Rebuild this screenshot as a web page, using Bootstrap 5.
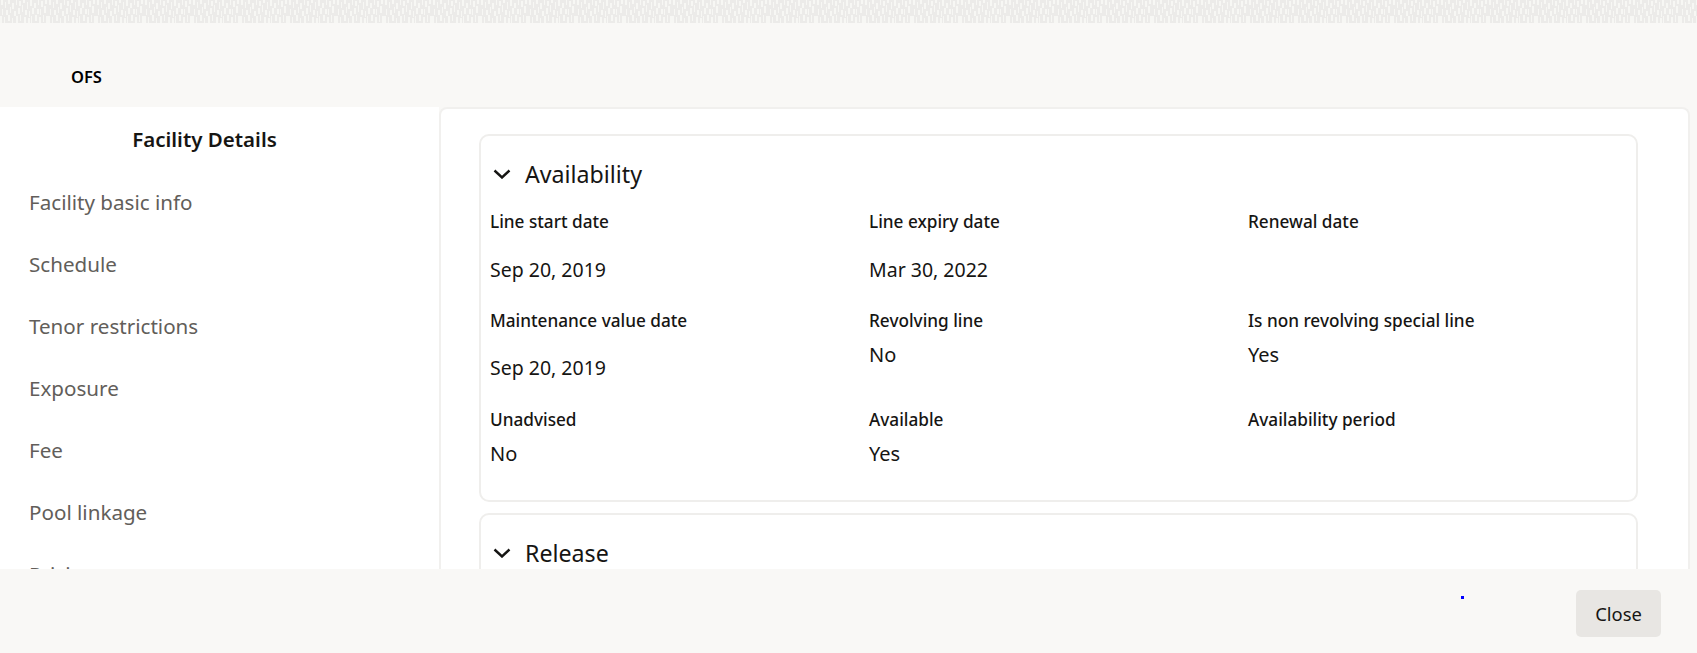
<!DOCTYPE html>
<html lang="en">
<head>
<meta charset="utf-8">
<title>Facility Details</title>
<link href="https://cdn.jsdelivr.net/npm/bootstrap@5.3.0/dist/css/bootstrap.min.css" rel="stylesheet">
<style>
html,body{height:653px;overflow:hidden}
body{background:#f9f8f6;font-family:"Noto Sans","Liberation Sans",sans-serif;color:#161513}
.top-band{height:23px;line-height:0;background:#ecebe9}
.top-band svg{display:block;width:100%;height:23px}
.head-bar{height:84px;padding:44px 0 0 71px;font-size:16.5px;font-weight:600;line-height:20px;color:#000}
.work{height:462px;overflow:hidden}
.side{width:439px;background:#fff;height:100%;overflow:hidden;flex:none}
.side-title{font-size:20.5px;font-weight:600;line-height:28px;text-align:center;padding:18px 30px 0 0;margin-bottom:18px}
.side-link{display:block;padding:0 0 0 29px;font-size:20.6px;line-height:62px;height:62px;color:#625e5a;font-weight:400;text-decoration:none}
.panel{width:1251px;flex:none;background:#fff;border:2px solid #f1f0ee;border-bottom:0;border-radius:8px 8px 0 0;padding:25px 50px 0 38px;height:100%;overflow:hidden}
.sect{border:2px solid #efeeec;border-radius:10px;margin-bottom:11px}
.sect-avail{height:368px}
.sect-head{display:flex;align-items:center;gap:14px;height:52px;padding:0 0 0 12px;margin-top:12px;font-size:23.2px;font-weight:400;line-height:30px}
.chev{width:18px;height:10px;flex:none}
.grid-row{display:grid;grid-template-columns:379px 379px 1fr;padding-left:9px}
.r0{padding-top:8px}
.r1{height:107px}.r2{height:99px}
.lab{font-size:17.2px;font-weight:500;line-height:24px;padding-top:2px}
.val{font-size:20px;line-height:26px;margin-top:23px}
.r2 .val{margin-top:22px}
.r2 .val.near,.val.near{margin-top:9px}
.date{font-size:19.5px}
.foot{height:84px;padding:21px 36px 0 0}
.close-btn{width:85px;height:47px;background:#e8e6e3;border:0;border-radius:5px;color:#161513;font-size:18.4px;font-weight:400;padding:0}
.close-btn:hover{background:#e8e6e3}
.dotmark{width:3px;height:3px;background:#0000ff;margin:6px 112px 0 0}
</style>
</head>
<body>
<div class="top-band">
  <svg aria-hidden="true"><defs><pattern id="weave" width="48" height="23" patternUnits="userSpaceOnUse"><g fill="#fbfaf8" fill-opacity=".75"><rect x="1" y="0" width="2" height="5"/><rect x="5" y="2" width="1" height="6"/><rect x="8" y="0" width="2" height="4"/><rect x="12" y="3" width="2" height="6"/><rect x="16" y="0" width="1" height="5"/><rect x="19" y="1" width="2" height="5"/><rect x="23" y="0" width="2" height="3"/><rect x="27" y="2" width="1" height="7"/><rect x="30" y="0" width="2" height="6"/><rect x="34" y="3" width="2" height="5"/><rect x="38" y="0" width="1" height="5"/><rect x="41" y="1" width="2" height="6"/><rect x="45" y="0" width="2" height="4"/><rect x="2" y="9" width="1" height="6"/><rect x="6" y="10" width="2" height="5"/><rect x="10" y="7" width="1" height="6"/><rect x="14" y="11" width="2" height="5"/><rect x="18" y="8" width="2" height="6"/><rect x="22" y="5" width="1" height="7"/><rect x="25" y="10" width="2" height="5"/><rect x="29" y="11" width="1" height="6"/><rect x="32" y="8" width="2" height="6"/><rect x="37" y="9" width="2" height="5"/><rect x="40" y="9" width="1" height="6"/><rect x="44" y="6" width="2" height="7"/><rect x="0" y="16" width="2" height="7"/><rect x="4" y="17" width="1" height="6"/><rect x="8" y="15" width="2" height="6"/><rect x="12" y="18" width="1" height="5"/><rect x="16" y="16" width="2" height="7"/><rect x="20" y="15" width="1" height="6"/><rect x="24" y="17" width="2" height="6"/><rect x="28" y="18" width="2" height="5"/><rect x="31" y="16" width="1" height="7"/><rect x="35" y="15" width="2" height="6"/><rect x="39" y="17" width="2" height="6"/><rect x="43" y="15" width="1" height="7"/><rect x="46" y="16" width="2" height="7"/></g></pattern></defs><rect width="100%" height="23" fill="url(#weave)"/></svg>
</div>
<div class="head-bar">OFS</div>
<div class="work d-flex">
  <nav class="side">
    <div class="side-title">Facility Details</div>
    <a class="side-link" href="#">Facility basic info</a>
    <a class="side-link" href="#">Schedule</a>
    <a class="side-link" href="#">Tenor restrictions</a>
    <a class="side-link" href="#">Exposure</a>
    <a class="side-link" href="#">Fee</a>
    <a class="side-link" href="#">Pool linkage</a>
    <a class="side-link" href="#">Pricing</a>
  </nav>
  <main class="panel">
    <section class="sect sect-avail">
      <div class="sect-head"><svg class="chev" viewBox="0 0 18 10"><path d="M1.5 1.5 9 8.5l7.5-7" fill="none" stroke="#161513" stroke-width="2.4"/></svg><span>Availability</span></div>
      <div class="grid-row r0 r1">
        <div><div class="lab">Line start date</div><div class="val date">Sep 20, 2019</div></div>
        <div><div class="lab">Line expiry date</div><div class="val date">Mar 30, 2022</div></div>
        <div><div class="lab">Renewal date</div></div>
      </div>
      <div class="grid-row r2">
        <div><div class="lab">Maintenance value date</div><div class="val date">Sep 20, 2019</div></div>
        <div><div class="lab">Revolving line</div><div class="val near">No</div></div>
        <div><div class="lab">Is non revolving special line</div><div class="val near">Yes</div></div>
      </div>
      <div class="grid-row">
        <div><div class="lab">Unadvised</div><div class="val near">No</div></div>
        <div><div class="lab">Available</div><div class="val near">Yes</div></div>
        <div><div class="lab">Availability period</div></div>
      </div>
    </section>
    <section class="sect">
      <div class="sect-head"><svg class="chev" viewBox="0 0 18 10"><path d="M1.5 1.5 9 8.5l7.5-7" fill="none" stroke="#161513" stroke-width="2.4"/></svg><span>Release</span></div>
    </section>
  </main>
</div>
<footer class="foot d-flex justify-content-end align-items-start">
  <div class="dotmark"></div>
  <button type="button" class="btn close-btn">Close</button>
</footer>
<script src="https://cdn.jsdelivr.net/npm/bootstrap@5.3.0/dist/js/bootstrap.bundle.min.js"></script>
</body>
</html>
